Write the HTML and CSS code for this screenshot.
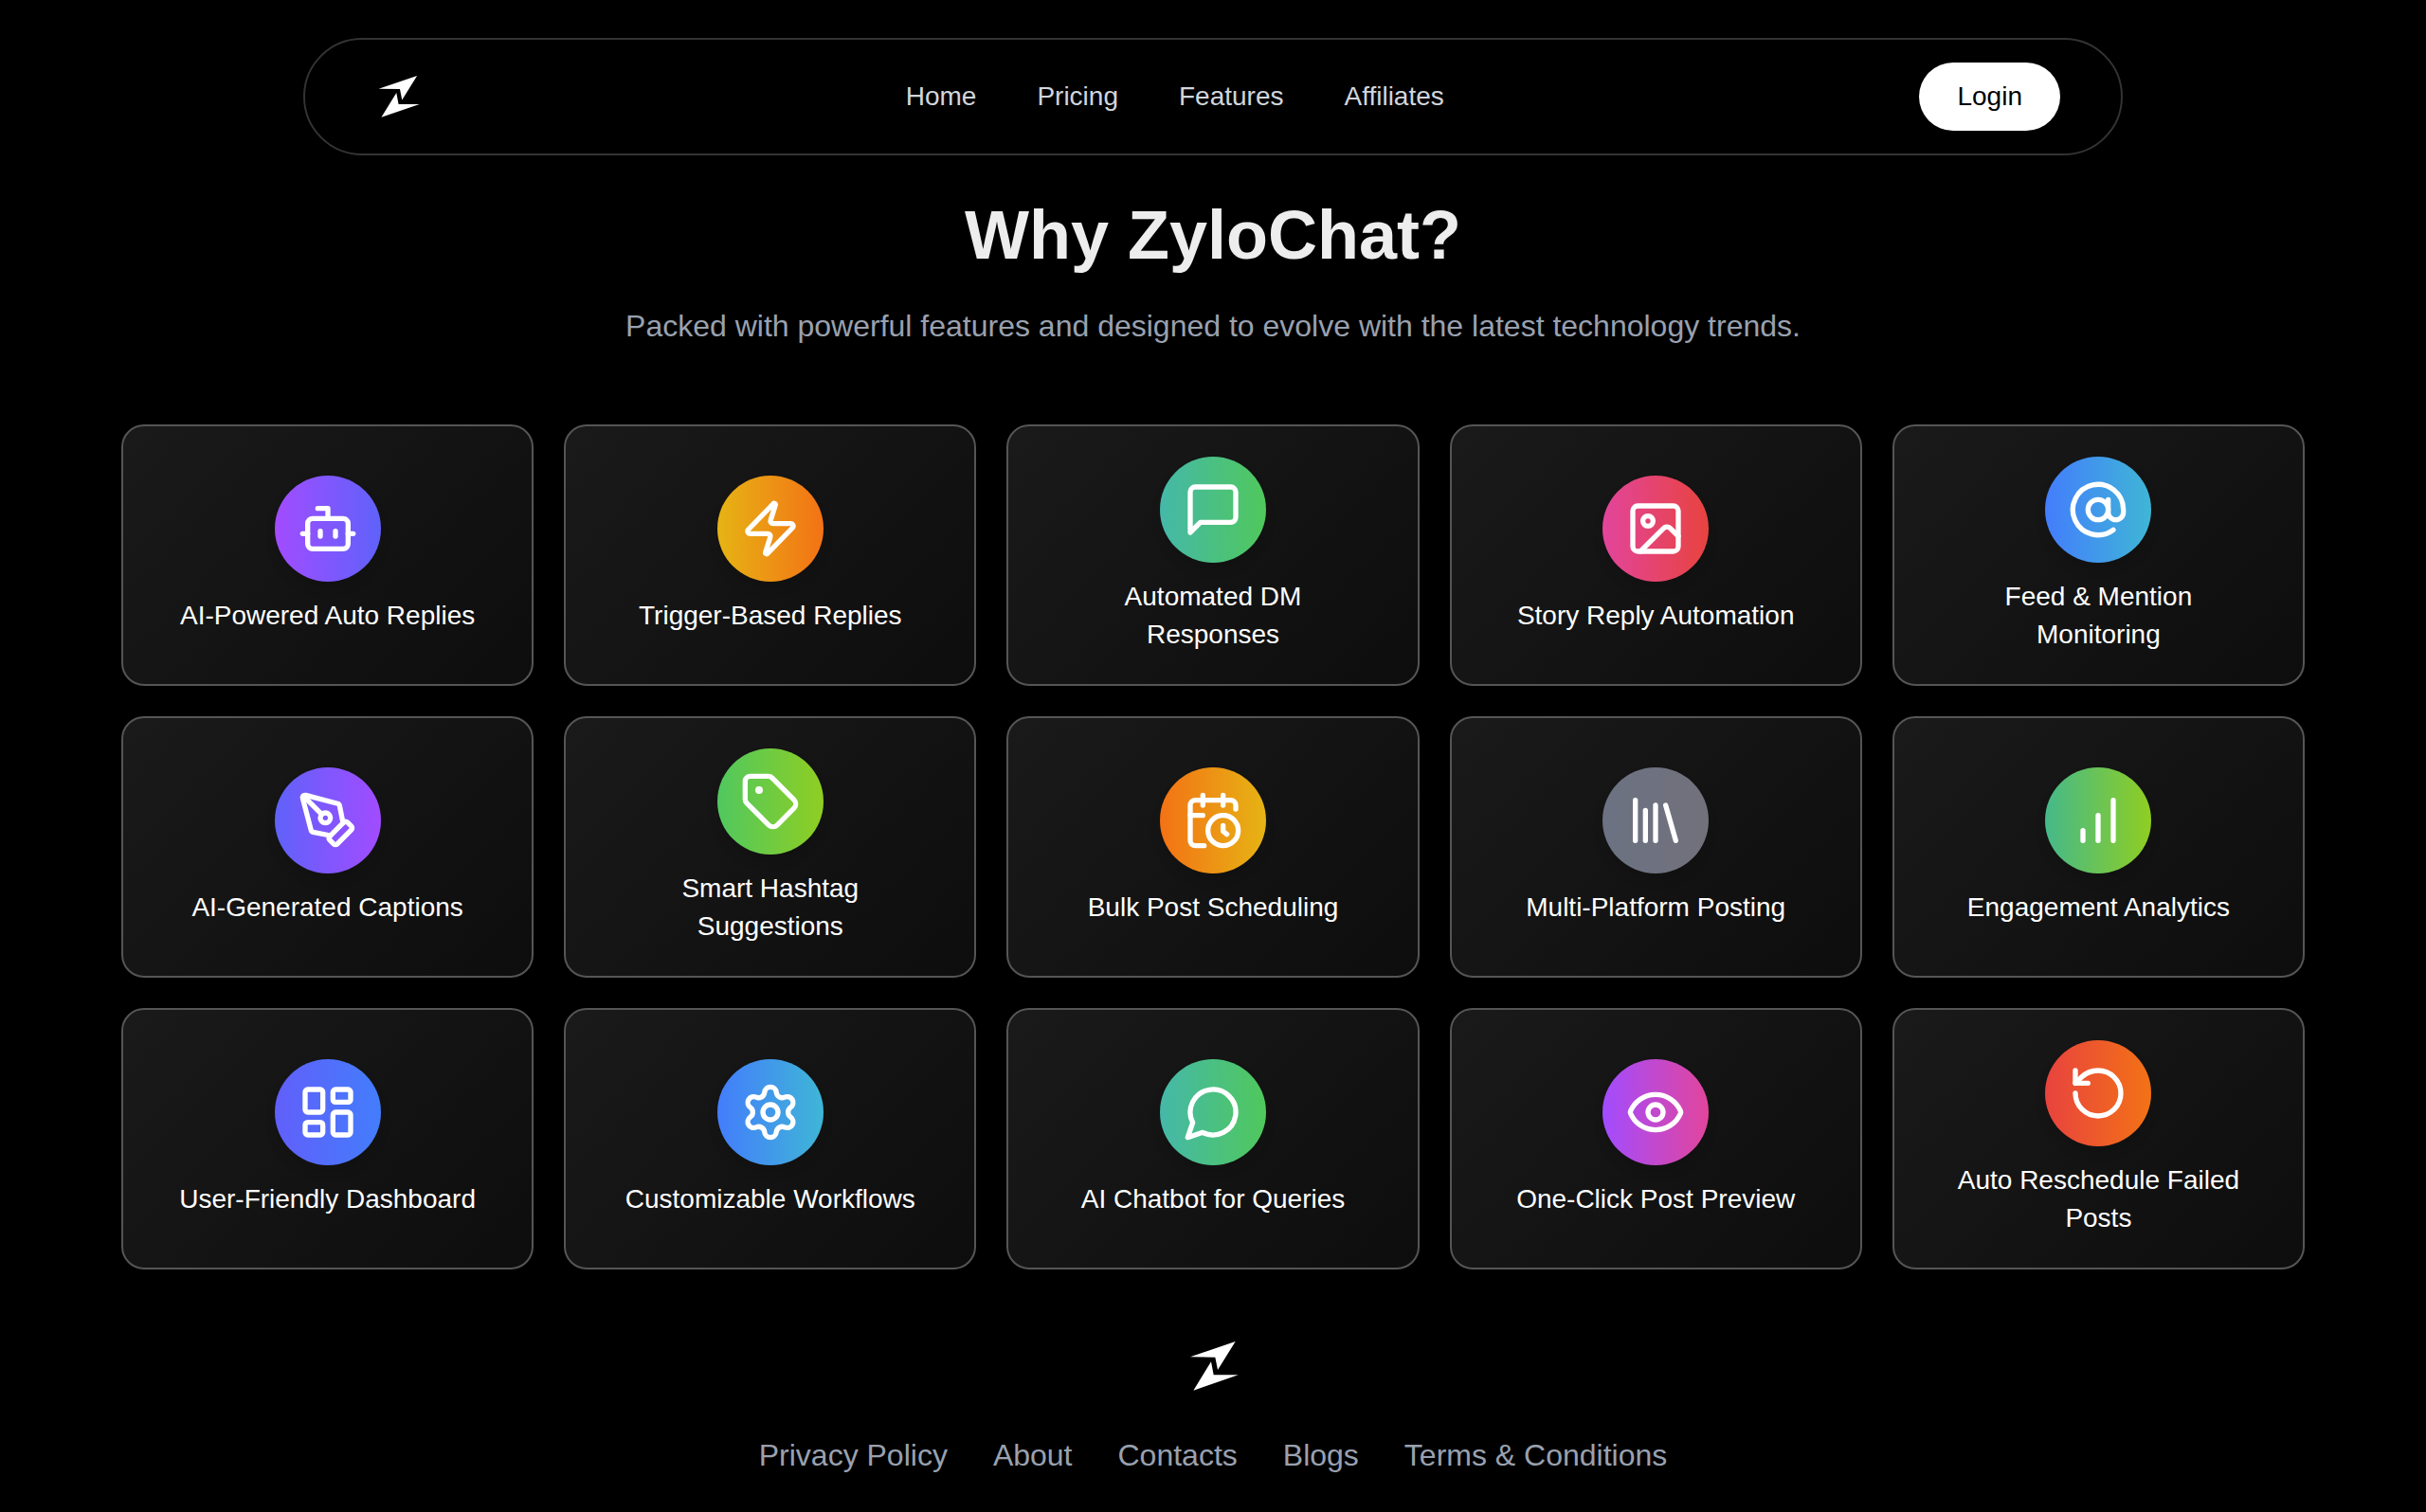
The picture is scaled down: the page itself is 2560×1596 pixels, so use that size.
FILE: index.html
```html
<!DOCTYPE html>
<html lang="en">
<head>
    <meta charset="UTF-8">
    <meta name="viewport" content="width=device-width, initial-scale=1.0">
    <title>ZyloChat</title>
    <link rel="stylesheet" href="styles.css">
</head>
<body>
<header class="navbar">
    <a href="#" class="logo-link" aria-label="ZyloChat">
        <svg class="logo" viewBox="60 36 240 240">
            <path d="M108 127L251 78L195 168L187 128Z"/>
            <path d="M260 184L118 233L174 142L182 184Z"/>
        </svg>
    </a>
    <nav class="nav-links">
        <a href="#">Home</a>
        <a href="#">Pricing</a>
        <a href="#">Features</a>
        <a href="#">Affiliates</a>
    </nav>
    <button type="button" class="login">Login</button>
</header>

<main class="features">
    <h1>Why ZyloChat?</h1>
    <p class="subtitle">Packed with powerful features and designed to evolve with the latest technology trends.</p>

    <div class="grid">
        <div class="card">
            <div class="icon purple-indigo">
                <svg viewBox="0 0 24 24"><path d="M12 8V4H8"/><rect width="16" height="12" x="4" y="8" rx="2"/><path d="M2 14h2"/><path d="M20 14h2"/><path d="M15 13v2"/><path d="M9 13v2"/></svg>
            </div>
            <h2>AI-Powered Auto Replies</h2>
        </div>
        <div class="card">
            <div class="icon yellow-orange">
                <svg viewBox="0 0 24 24"><path d="M4 14a1 1 0 0 1-.78-1.63l9.9-10.2a.5.5 0 0 1 .86.46l-1.92 6.02A1 1 0 0 0 13 10h7a1 1 0 0 1 .78 1.63l-9.9 10.2a.5.5 0 0 1-.86-.46l1.92-6.02A1 1 0 0 0 11 14z"/></svg>
            </div>
            <h2>Trigger-Based Replies</h2>
        </div>
        <div class="card">
            <div class="icon teal-green">
                <svg viewBox="0 0 24 24"><path d="M21 15a2 2 0 0 1-2 2H7l-4 4V5a2 2 0 0 1 2-2h14a2 2 0 0 1 2 2z"/></svg>
            </div>
            <h2>Automated DM Responses</h2>
        </div>
        <div class="card">
            <div class="icon pink-red">
                <svg viewBox="0 0 24 24"><rect width="18" height="18" x="3" y="3" rx="2"/><circle cx="9" cy="9" r="2"/><path d="m21 15-3.086-3.086a2 2 0 0 0-2.828 0L6 21"/></svg>
            </div>
            <h2>Story Reply Automation</h2>
        </div>
        <div class="card">
            <div class="icon blue-cyan">
                <svg viewBox="0 0 24 24"><circle cx="12" cy="12" r="4"/><path d="M16 8v5a3 3 0 0 0 6 0v-1a10 10 0 1 0-4 8"/></svg>
            </div>
            <h2>Feed &amp; Mention Monitoring</h2>
        </div>

        <div class="card">
            <div class="icon indigo-purple">
                <svg viewBox="0 0 24 24"><path d="M15.707 21.293a1 1 0 0 1-1.414 0l-1.586-1.586a1 1 0 0 1 0-1.414l5.586-5.586a1 1 0 0 1 1.414 0l1.586 1.586a1 1 0 0 1 0 1.414z"/><path d="m18 13-1.375-6.874a1 1 0 0 0-.746-.776L3.235 2.028a1 1 0 0 0-1.207 1.207L5.35 15.879a1 1 0 0 0 .776.746L13 18"/><path d="m2.3 2.3 7.286 7.286"/><circle cx="11" cy="11" r="2"/></svg>
            </div>
            <h2>AI-Generated Captions</h2>
        </div>
        <div class="card">
            <div class="icon green-lime">
                <svg viewBox="0 0 24 24"><path d="M12.586 2.586A2 2 0 0 0 11.172 2H4a2 2 0 0 0-2 2v7.172a2 2 0 0 0 .586 1.414l8.704 8.704a2.426 2.426 0 0 0 3.42 0l6.58-6.58a2.426 2.426 0 0 0 0-3.42z"/><circle cx="7.5" cy="7.5" r=".5" fill="currentColor"/></svg>
            </div>
            <h2>Smart Hashtag Suggestions</h2>
        </div>
        <div class="card">
            <div class="icon orange-yellow">
                <svg viewBox="0 0 24 24"><path d="M21 7.5V6a2 2 0 0 0-2-2H5a2 2 0 0 0-2 2v14a2 2 0 0 0 2 2h3.5"/><path d="M16 2v4"/><path d="M8 2v4"/><path d="M3 10h5"/><path d="M17.5 17.5 16 16.3V14"/><circle cx="16" cy="16" r="6"/></svg>
            </div>
            <h2>Bulk Post Scheduling</h2>
        </div>
        <div class="card">
            <div class="icon gray">
                <svg viewBox="0 0 24 24"><path d="m16 6 4 14"/><path d="M12 6v14"/><path d="M8 8v12"/><path d="M4 4v16"/></svg>
            </div>
            <h2>Multi-Platform Posting</h2>
        </div>
        <div class="card">
            <div class="icon emerald-lime">
                <svg viewBox="0 0 24 24"><path d="M12 20V10"/><path d="M18 20V4"/><path d="M6 20v-4"/></svg>
            </div>
            <h2>Engagement Analytics</h2>
        </div>

        <div class="card">
            <div class="icon indigo-blue">
                <svg viewBox="0 0 24 24"><rect width="7" height="9" x="3" y="3" rx="1"/><rect width="7" height="5" x="14" y="3" rx="1"/><rect width="7" height="9" x="14" y="12" rx="1"/><rect width="7" height="5" x="3" y="16" rx="1"/></svg>
            </div>
            <h2>User-Friendly Dashboard</h2>
        </div>
        <div class="card">
            <div class="icon blue-cyan">
                <svg viewBox="0 0 24 24"><path d="M9.671 4.136a2.34 2.34 0 0 1 4.659 0 2.34 2.34 0 0 0 3.319 1.915 2.34 2.34 0 0 1 2.33 4.033 2.34 2.34 0 0 0 0 3.831 2.34 2.34 0 0 1-2.33 4.033 2.34 2.34 0 0 0-3.319 1.915 2.34 2.34 0 0 1-4.659 0 2.34 2.34 0 0 0-3.32-1.915 2.34 2.34 0 0 1-2.33-4.033 2.34 2.34 0 0 0 0-3.831A2.34 2.34 0 0 1 6.35 6.051a2.34 2.34 0 0 0 3.319-1.915"/><circle cx="12" cy="12" r="3"/></svg>
            </div>
            <h2>Customizable Workflows</h2>
        </div>
        <div class="card">
            <div class="icon teal-green">
                <svg viewBox="0 0 24 24"><path d="M7.9 20A9 9 0 1 0 4 16.1L2 22Z"/></svg>
            </div>
            <h2>AI Chatbot for Queries</h2>
        </div>
        <div class="card">
            <div class="icon purple-pink">
                <svg viewBox="0 0 24 24"><path d="M2.062 12.348a1 1 0 0 1 0-.696 10.75 10.75 0 0 1 19.876 0 1 1 0 0 1 0 .696 10.75 10.75 0 0 1-19.876 0"/><circle cx="12" cy="12" r="3"/></svg>
            </div>
            <h2>One-Click Post Preview</h2>
        </div>
        <div class="card">
            <div class="icon red-orange">
                <svg viewBox="0 0 24 24"><path d="M3 12a9 9 0 1 0 9-9 9.75 9.75 0 0 0-6.74 2.74L3 8"/><path d="M3 3v5h5"/></svg>
            </div>
            <h2>Auto Reschedule Failed Posts</h2>
        </div>
    </div>
</main>

<footer class="footer">
    <svg class="logo logo-large" viewBox="60 36 240 240">
        <path d="M108 127L251 78L195 168L187 128Z"/>
        <path d="M260 184L118 233L174 142L182 184Z"/>
    </svg>
    <nav class="footer-links">
        <a href="#">Privacy Policy</a>
        <a href="#">About</a>
        <a href="#">Contacts</a>
        <a href="#">Blogs</a>
        <a href="#">Terms &amp; Conditions</a>
    </nav>
</footer>
</body>
</html>
```
FILE: styles.css
```css
* {
    box-sizing: border-box;
    margin: 0;
    padding: 0;
}
body {
    background-color: #000;
    color: #ededed;
    font-family: "Liberation Sans", Arial, sans-serif;
}
a {
    text-decoration: none;
}

/* Navbar */
.navbar {
    display: flex;
    justify-content: space-between;
    align-items: center;
    width: 75%;
    margin: 40px auto 0;
    padding: 24px 64px;
    border: 2px solid #333;
    border-radius: 64px;
}
.logo-link {
    display: flex;
}
.logo {
    display: block;
    width: 68px;
    height: 68px;
    fill: #fff;
}
.nav-links {
    display: flex;
    gap: 64px;
    font-size: 28px;
    line-height: 40px;
}
.nav-links a {
    color: #d1d5dc;
}
.login {
    padding: 16px 40px;
    border: none;
    border-radius: 36px;
    background-color: #fff;
    color: #000;
    font-family: inherit;
    font-size: 28px;
    line-height: 40px;
    cursor: pointer;
}

/* Features */
.features {
    padding: 44px 128px 0;
    text-align: center;
}
.features h1 {
    font-size: 72px;
    line-height: 80px;
}
.subtitle {
    margin-top: 32px;
    color: #99a1af;
    font-size: 32px;
    line-height: 48px;
}
.grid {
    display: grid;
    grid-template-columns: repeat(5, 1fr);
    gap: 32px;
    margin-top: 80px;
}
.card {
    display: flex;
    flex-direction: column;
    justify-content: center;
    align-items: center;
    min-height: 276px;
    padding: 32px 56px;
    border: 2px solid #555;
    border-radius: 24px;
    background: linear-gradient(135deg, #1a1a1a, #0d0d0d) border-box;
}
.card h2 {
    margin-top: 16px;
    color: #fff;
    font-size: 28px;
    font-weight: normal;
    line-height: 40px;
}
.icon {
    display: flex;
    justify-content: center;
    align-items: center;
    width: 112px;
    height: 112px;
    border-radius: 50%;
    box-shadow: 0 8px 12px rgba(0, 0, 0, 0.1);
    color: #fff;
}
.icon svg {
    width: 64px;
    height: 64px;
    fill: none;
    stroke: currentColor;
    stroke-width: 2;
    stroke-linecap: round;
    stroke-linejoin: round;
}

/* Icon backgrounds */
.purple-indigo {
    background: linear-gradient(to right, #a24cff, #5f62fa);
}
.indigo-purple {
    background: linear-gradient(to right, #5f62fa, #a24cff);
}
.yellow-orange {
    background: linear-gradient(to right, #e6b414, #f37215);
}
.orange-yellow {
    background: linear-gradient(to right, #f37215, #e6b414);
}
.teal-green {
    background: linear-gradient(to right, #45b8a9, #50c85c);
}
.green-lime {
    background: linear-gradient(to right, #50c85f, #8fce22);
}
.emerald-lime {
    background: linear-gradient(to right, #45b98a, #8fce22);
}
.pink-red {
    background: linear-gradient(to right, #e2459c, #e8433f);
}
.blue-cyan {
    background: linear-gradient(to right, #437dfc, #3fb6d6);
}
.indigo-blue {
    background: linear-gradient(to right, #615ffa, #437dfc);
}
.purple-pink {
    background: linear-gradient(to right, #a24cff, #e2459c);
}
.red-orange {
    background: linear-gradient(to right, #e8433f, #f37215);
}
.gray {
    background: linear-gradient(to right, #6b7282, #72717b);
}

/* Footer */
.footer {
    display: flex;
    flex-direction: column;
    align-items: center;
    gap: 30px;
    padding: 62px 0 36px;
}
.logo-large {
    width: 80px;
    height: 80px;
}
.footer-links {
    display: flex;
    gap: 48px;
    font-size: 32px;
    line-height: 48px;
}
.footer-links a {
    color: #99a1af;
}
```
